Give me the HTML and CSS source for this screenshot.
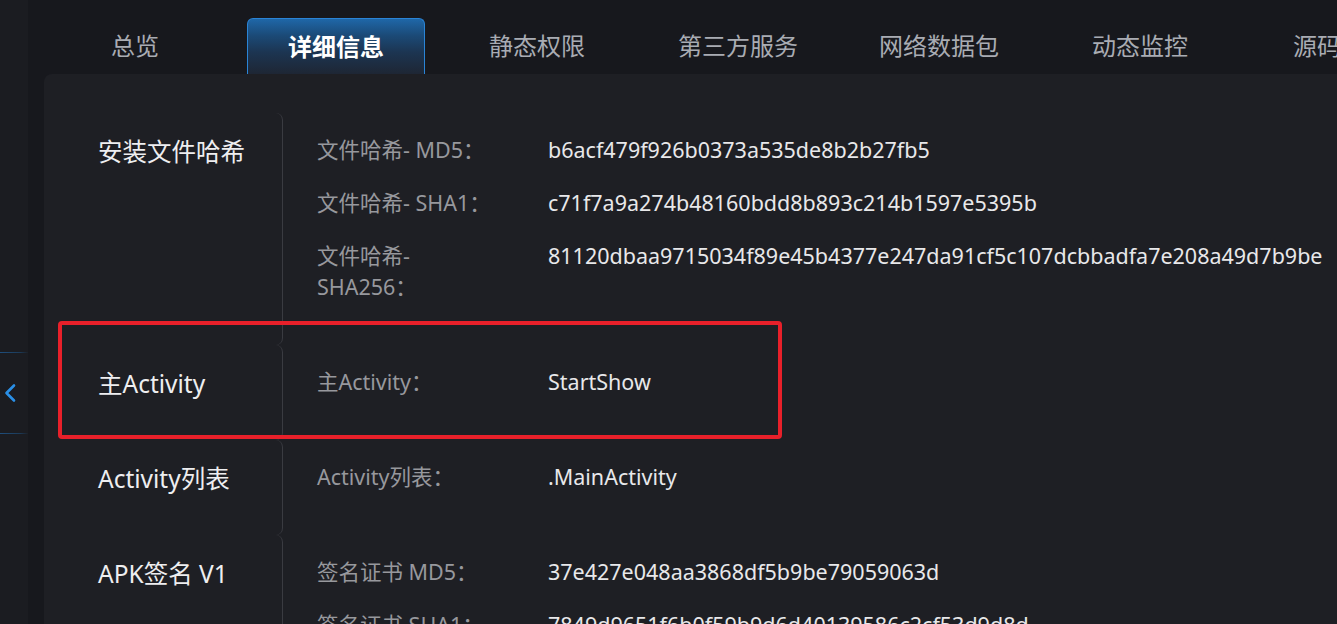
FILE: index.html
```html
<!DOCTYPE html>
<html lang="zh-CN">
<head>
<meta charset="utf-8">
<title>详细信息</title>
<link rel="stylesheet" href="styles.css">
</head>
<body>
<div class="page">
  <aside class="sidebar">
    <div class="collapse">
      <svg class="chev" width="13" height="20" viewBox="0 0 13 20"><path d="M11 2.5 L3.5 10 L11 17.5" fill="none" stroke="#2a8fe6" stroke-width="2.6" stroke-linecap="round" stroke-linejoin="round"/></svg>
    </div>
  </aside>
  <main class="main">
    <nav class="tabs">
      <div class="tab">总览</div>
      <div class="tab active">详细信息</div>
      <div class="tab">静态权限</div>
      <div class="tab">第三方服务</div>
      <div class="tab">网络数据包</div>
      <div class="tab">动态监控</div>
      <div class="tab">源码分析</div>
    </nav>
    <section class="panel">
      <div class="group">
        <div class="label">安装文件哈希</div>
        <div class="items">
          <div class="item"><span class="key">文件哈希- MD5：</span><span class="val">b6acf479f926b0373a535de8b2b27fb5</span></div>
          <div class="item"><span class="key">文件哈希- SHA1：</span><span class="val">c71f7a9a274b48160bdd8b893c214b1597e5395b</span></div>
          <div class="item"><span class="key">文件哈希- SHA256：</span><span class="val">81120dbaa9715034f89e45b4377e247da91cf5c107dcbbadfa7e208a49d7b9be</span></div>
        </div>
      </div>
      <div class="group">
        <div class="label">主Activity</div>
        <div class="items">
          <div class="item"><span class="key">主Activity：</span><span class="val">StartShow</span></div>
        </div>
      </div>
      <div class="group">
        <div class="label">Activity列表</div>
        <div class="items">
          <div class="item"><span class="key">Activity列表：</span><span class="val">.MainActivity</span></div>
        </div>
      </div>
      <div class="group">
        <div class="label">APK签名 V1</div>
        <div class="items">
          <div class="item"><span class="key">签名证书 MD5：</span><span class="val">37e427e048aa3868df5b9be79059063d</span></div>
          <div class="item"><span class="key">签名证书 SHA1：</span><span class="val">7849d9651f6b0f59b9d6d40139586c2cf53d9d8d</span></div>
        </div>
      </div>
    </section>
  </main>
</div>
<div class="highlight"></div>
</body>
</html>
```

FILE: styles.css
```css
* { box-sizing: border-box; }
html, body {
  margin: 0;
  padding: 0;
  height: 100%;
  overflow: hidden;
  background: #17181d;
  font-family: "Noto Sans", "Noto Sans CJK SC", sans-serif;
}
.page {
  display: flex;
  height: 624px;
  width: 1337px;
}
.sidebar {
  width: 28px;
  flex: none;
  background: #1b1c21;
  display: flex;
  flex-direction: column;
  justify-content: flex-start;
}
.collapse {
  margin-top: 352px;
  height: 82px;
  border-top: 1px solid;
  border-bottom: 1px solid;
  border-image: linear-gradient(90deg, #1f4f7e 0%, #1c3a58 70%, rgba(28,40,55,0) 100%) 1;
  display: flex;
  align-items: center;
  padding-left: 3px;
}
.main {
  margin-left: 16px;
  flex: 1;
  min-width: 0;
  display: flex;
  flex-direction: column;
  overflow: hidden;
}
.tabs {
  display: flex;
  gap: 23px;
  padding: 18px 0 0 2px;
  height: 74px;
  white-space: nowrap;
}
.tab {
  flex: none;
  width: 178px;
  height: 56px;
  display: flex;
  align-items: center;
  justify-content: center;
  font-size: 24px;
  color: #a9acb3;
  padding-bottom: 3px;
}
.tab.active {
  color: #ffffff;
  font-weight: 700;
  border: 1px solid #2a84d6;
  border-bottom: none;
  border-radius: 6px 6px 0 0;
  background: linear-gradient(180deg, #1f67a8 0%, #1b4a77 30%, #1c3552 60%, #1e2634 100%);
}
.panel {
  flex: 1;
  background: #1e1f24;
  border-radius: 8px 0 0 0;
  padding-top: 39px;
  width: 1400px;
}
.group {
  display: flex;
}
.label {
  width: 239px;
  flex: none;
  padding: 23px 0 0 54px;
  font-size: 24.5px;
  line-height: 32px;
  color: #eeeef0;
  border-right: 1px solid #3a3b41;
  border-radius: 0 7px 7px 0;
}
.items {
  padding: 10px 0 32px 34px;
  flex: 1;
}
.item {
  display: flex;
  padding: 11px 0;
  font-size: 21.5px;
  line-height: 31px;
}
.key {
  width: 231px;
  flex: none;
  padding-right: 44px;
  color: #97989d;
}
.val {
  color: #e8e8ea;
  white-space: nowrap;
}
.highlight {
  position: absolute;
  left: 58px;
  top: 321px;
  width: 724px;
  height: 118px;
  border: 4px solid #e8202a;
  border-radius: 4px;
  pointer-events: none;
}
```
